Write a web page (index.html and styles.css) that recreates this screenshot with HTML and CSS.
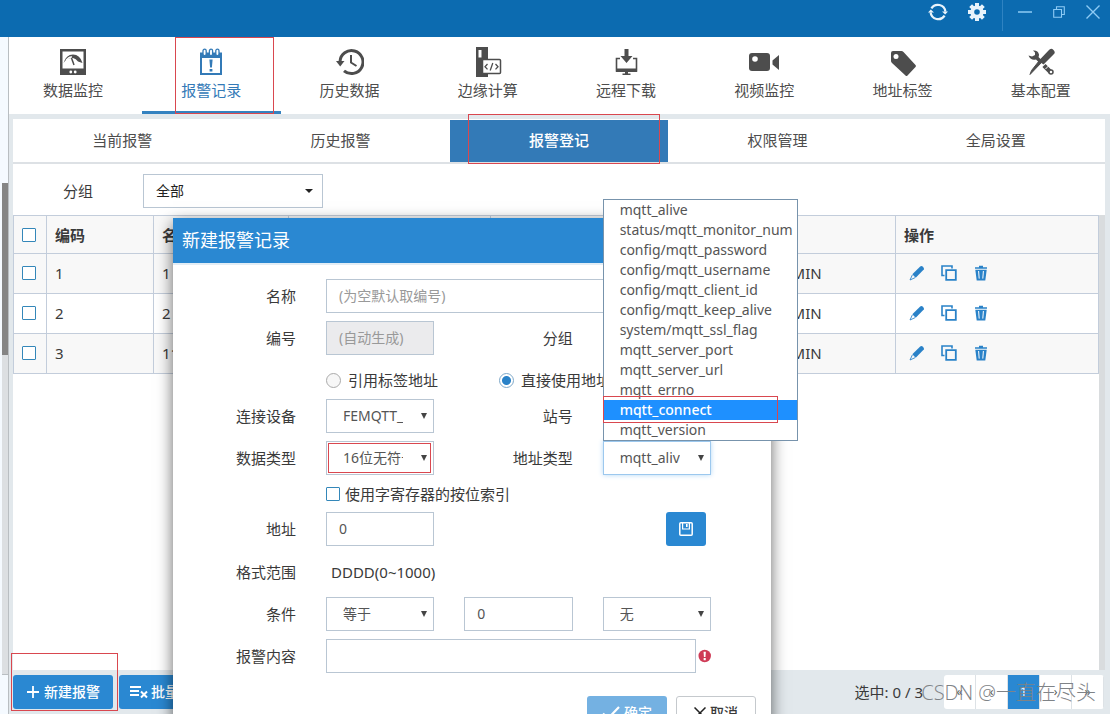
FILE: index.html
```html
<!DOCTYPE html>
<html lang="zh-CN">
<head>
<meta charset="utf-8">
<title>新建报警记录</title>
<link rel="stylesheet" href="styles.css">
</head>
<body>
<svg class="defs" aria-hidden="true">
  <symbol id="i-edit" viewBox="0 0 16 16"><path d="M3.300 9.300 11.200 1.400Q12.500.300 14 1.800T14.800 4.600L6.700 12.700Z" fill="currentColor"/><path d="M3.300 10 1 15l5-2.300" fill="none" stroke="currentColor" stroke-width=".9"/></symbol>
  <symbol id="i-copy" viewBox="0 0 16 16"><path d="M3.500 10.500H1V1h10v2.500" fill="none" stroke="currentColor" stroke-width="1.600"/><path d="M5.200 5.200h9.600v9.600H5.200z" fill="none" stroke="currentColor" stroke-width="1.800"/></symbol>
  <symbol id="i-trash" viewBox="0 0 16 16"><path d="M2 2.200h4V.8h4v1.400h4v1.600H2zM2.300 4.800h11.400L12.300 15.400H3.700z" fill="currentColor"/><path d="M5.600 6l.6 7.600M10.400 6l-.6 7.600" stroke="#fff" stroke-width="1"/></symbol>
</svg>

<header class="titlebar">
  <button class="title-btn" aria-label="刷新"><svg width="20" height="20" viewBox="0 0 20 20"><path d="M3.400 6.400A7.600 7.600 0 0 1 17.400 9.600M16.600 13.600A7.600 7.600 0 0 1 2.600 10.400" fill="none" stroke="#e8f3fb" stroke-width="2.200"/><path d="M14 9.400H20L17.200 12.600zM0 10.600h6L2.800 7.400z" fill="#e8f3fb"/></svg></button>
  <button class="title-btn" aria-label="设置"><svg width="18" height="18" viewBox="0 0 18 18"><g fill="#e8f3fb"><path d="M7 0h4v18H7zM0 7h18v4H0z"/><path d="M7 0h4v18H7zM0 7h18v4H0z" transform="rotate(45 9 9)"/><circle cx="9" cy="9" r="6.600"/></g><circle cx="9" cy="9" r="2.800" fill="#0c6bb0"/></svg></button>
  <div class="window-controls">
    <button class="title-btn" aria-label="最小化"><svg width="14" height="14" viewBox="0 0 14 14"><path d="M0 7h14" stroke="#8ecbf5" stroke-width="1.500"/></svg></button>
    <button class="title-btn" aria-label="还原"><svg width="12" height="12" viewBox="0 0 12 12"><path d="M.7 3.500h7.800v7.800H.7zM3.500 3.500V.7h7.800v7.800H8.500" fill="none" stroke="#8ecbf5" stroke-width="1.100"/></svg></button>
    <button class="title-btn" aria-label="关闭"><svg width="14" height="14" viewBox="0 0 14 14"><path d="M.5.5l13 13M13.500.5l-13 13" stroke="#8ecbf5" stroke-width="1.400"/></svg></button>
  </div>
</header>

<div class="app">
  <aside class="rail"><div class="rail-thumb"></div><div class="rail-track"></div></aside>
  <main class="content">
    <nav class="main-nav">
      <a href="#" class="nav-item"><svg width="28" height="28" viewBox="0 0 28 28"><path d="M1 1h26v26H1z" fill="currentColor"/><path d="M3.500 3.500h21v17h-21z" fill="#fff"/><path d="M4.500 15Q7 6.500 14 6.500T23.500 15L19 13.500Q17 10.500 14 10 8 9.500 4.500 15z" fill="currentColor"/><path d="M7 12.500Q10 8.500 13 9" fill="none" stroke="#fff" stroke-width="1.500"/><path d="M12.500 10l2.500 7" stroke="currentColor" stroke-width="1.500"/><circle cx="11.800" cy="24" r="1.400" fill="#fff"/><circle cx="16.200" cy="24" r="1.400" fill="#fff"/></svg><span>数据监控</span></a>
      <a href="#" class="nav-item active marked"><svg width="28" height="28" viewBox="0 0 28 28"><path d="M3 4.500h22V27H3z" fill="currentColor"/><path d="M5 10h18v15H5z" fill="#fff"/><g fill="#fff" stroke="currentColor" stroke-width="1.300"><rect x="6" y="1.200" width="3.200" height="6.500" rx="1.600"/><rect x="12.400" y="1.200" width="3.200" height="6.500" rx="1.600"/><rect x="18.800" y="1.200" width="3.200" height="6.500" rx="1.600"/></g><path d="M12.400 11.500h3.200l-.7 8h-1.800zM12.600 21h2.800v2.500h-2.800z" fill="currentColor"/></svg><span>报警记录</span></a>
      <a href="#" class="nav-item"><svg width="28" height="28" viewBox="0 0 28 28"><path d="M4 13.500A11.500 11.500 0 1 1 8 22.800" fill="none" stroke="currentColor" stroke-width="3"/><path d="M0 13h8.500L4.200 18.500z" fill="currentColor"/><path d="M15 7v7.500l5.500 3.500" fill="none" stroke="currentColor" stroke-width="2"/></svg><span>历史数据</span></a>
      <a href="#" class="nav-item"><svg width="28" height="30" viewBox="0 0 28 30"><path d="M2 0h12v30H2z" fill="currentColor"/><path d="M4.500 3h3v7.500h-3z" fill="#fff"/><rect x="8.500" y="12.500" width="18" height="14" rx="1" fill="#fff" stroke="currentColor" stroke-width="1.500"/><path d="M13.500 17l-2.500 2.700 2.500 2.700M21.500 17l2.500 2.700-2.500 2.700M18.800 16l-2.600 7.500" fill="none" stroke="currentColor" stroke-width="1.300"/></svg><span>边缘计算</span></a>
      <a href="#" class="nav-item"><svg width="28" height="28" viewBox="0 0 28 28"><path d="M8 10.500H4.500V23h20V10.500H21" fill="none" stroke="currentColor" stroke-width="1.600"/><path d="M4 20.500h21v3.500H4zM12.500 1h4v7h4l-6 7-6-7h4zM13 24h3v1.500h2.500V27h-8v-1.500H13z" fill="currentColor"/></svg><span>远程下载</span></a>
      <a href="#" class="nav-item"><svg width="32" height="28" viewBox="0 0 32 28"><rect x="1" y="5" width="21" height="18" rx="3" fill="currentColor"/><circle cx="7" cy="11" r="2.800" fill="#fff"/><path d="M24.500 12.500l6.500-5.500v15l-6.500-5.500z" fill="currentColor"/></svg><span>视频监控</span></a>
      <a href="#" class="nav-item"><svg width="28" height="28" viewBox="0 0 28 28"><path d="M2 5Q2 3 4 3h8.500Q13.500 3 14.500 4L26.500 17Q27.500 18 26.500 19L18.500 27.500Q17.500 28.500 16.500 27.500L3 15Q2 14 2 13z" fill="currentColor"/><circle cx="7" cy="8.500" r="2.500" fill="#fff"/></svg><span>地址标签</span></a>
      <a href="#" class="nav-item"><svg width="28" height="28" viewBox="0 0 28 28"><path d="M11.500 13L21.500 2.500Q24-.500 26.500 2T26.500 6.500L16.500 16.500z" fill="currentColor"/><path d="M15 14L3 26.500l1.500-4L12 13z" stroke="currentColor" fill="currentColor"/><path d="M6 2.500Q11 2 12 6.500Q12 8 11.500 9L15 12.500 12.500 15 9 11.500Q4 13 1.500 7.500L5 8.500 8 7 8 4.500z" fill="currentColor"/><path d="M17 17.500l6.500 6.500" stroke="currentColor" stroke-width="4.500"/><path d="M18.500 21l3-3" stroke="#fff" stroke-width="1"/><circle cx="24" cy="24" r="2" fill="#fff" stroke="currentColor" stroke-width="1.500"/></svg><span>基本配置</span></a>
    </nav>

    <div class="workspace">
      <nav class="sub-tabs">
        <a href="#" class="tab">当前报警</a>
        <a href="#" class="tab">历史报警</a>
        <a href="#" class="tab current marked">报警登记</a>
        <a href="#" class="tab">权限管理</a>
        <a href="#" class="tab">全局设置</a>
      </nav>
      <div class="filter">
        <label for="group">分组</label>
        <span class="select-box"><select id="group"><option>全部</option></select><svg class="caret" width="8" height="6" viewBox="0 0 8 6"><path d="M0 1h8L4 5z" fill="#222"/></svg></span>
      </div>
      <div class="table-wrap">
        <table class="alarms">
          <colgroup><col class="c-check"><col class="c-code"><col class="c-name"><col class="c-mid"><col><col class="c-ops"></colgroup>
          <thead><tr><th><input type="checkbox" aria-label="全选"></th><th>编码</th><th>名称</th><th></th><th></th><th>操作</th></tr></thead>
          <tbody>
            <tr><td><input type="checkbox" aria-label="选择 1"></td><td>1</td><td>1</td><td></td><td class="user">ADMIN</td><td><div class="ops"><button aria-label="编辑"><svg width="16" height="16"><use href="#i-edit"/></svg></button><button aria-label="复制"><svg width="16" height="16"><use href="#i-copy"/></svg></button><button aria-label="删除"><svg width="16" height="16"><use href="#i-trash"/></svg></button></div></td></tr>
            <tr><td><input type="checkbox" aria-label="选择 2"></td><td>2</td><td>2</td><td></td><td class="user">ADMIN</td><td><div class="ops"><button aria-label="编辑"><svg width="16" height="16"><use href="#i-edit"/></svg></button><button aria-label="复制"><svg width="16" height="16"><use href="#i-copy"/></svg></button><button aria-label="删除"><svg width="16" height="16"><use href="#i-trash"/></svg></button></div></td></tr>
            <tr><td><input type="checkbox" aria-label="选择 3"></td><td>3</td><td>11</td><td></td><td class="user">ADMIN</td><td><div class="ops"><button aria-label="编辑"><svg width="16" height="16"><use href="#i-edit"/></svg></button><button aria-label="复制"><svg width="16" height="16"><use href="#i-copy"/></svg></button><button aria-label="删除"><svg width="16" height="16"><use href="#i-trash"/></svg></button></div></td></tr>
          </tbody>
        </table>
        <div class="scrollbar"></div>
      </div>
    </div>

    <footer class="bottom-bar">
      <button class="btn primary marked"><svg width="14" height="14" viewBox="0 0 14 14"><path d="M7 1v12M1 7h12" stroke="#fff" stroke-width="1.800"/></svg>新建报警</button>
      <button class="btn primary bulk"><svg width="18" height="14" viewBox="0 0 18 14"><path d="M0 2h11M0 6h9M0 10h9M11 6.500l6 6M17 6.500l-6 6" stroke="#fff" stroke-width="2"/></svg>批量删除</button>
      <span class="count">选中: 0 / 3</span>
      <div class="pager"><button aria-label="首页">«</button><button aria-label="上一页">‹</button><button class="page-current">1</button><button aria-label="下一页">›</button><button aria-label="末页">»</button></div>
      <span class="watermark">CSDN @一直在尽头</span>
    </footer>
  </main>
</div>

<section class="modal" role="dialog" aria-labelledby="dlg-title">
  <h2 id="dlg-title">新建报警记录</h2>
  <form class="form">
    <div class="row"><label for="name">名称</label><input id="name" class="span-3" type="text" placeholder="(为空默认取编号)"></div>
    <div class="row"><label for="number">编号</label><input id="number" type="text" placeholder="(自动生成)" disabled><span class="label">分组</span></div>
    <div class="row radios">
      <label class="choice first"><input type="radio" name="mode">引用标签地址</label>
      <label class="choice second"><input type="radio" name="mode" checked>直接使用地址</label>
    </div>
    <div class="row"><label for="device">连接设备</label><span class="select-box"><select id="device"><option>FEMQTT_</option></select><svg class="arrow" width="6" height="7" viewBox="0 0 6 7"><path d="M0 0h6L3 6z" fill="#444"/></svg></span><span class="label">站号</span></div>
    <div class="row"><label for="dtype">数据类型</label><span class="select-box marked"><select id="dtype"><option>16位无符号</option></select><svg class="arrow" width="6" height="7" viewBox="0 0 6 7"><path d="M0 0h6L3 6z" fill="#444"/></svg></span><label for="atype">地址类型</label>
      <span class="select-box open"><select id="atype"><option>mqtt_alive</option></select><svg class="arrow" width="6" height="7" viewBox="0 0 6 7"><path d="M0 0h6L3 6z" fill="#444"/></svg>
        <ul class="menu" role="listbox" aria-label="地址类型">
          <li role="option">mqtt_alive</li><li role="option">status/mqtt_monitor_num</li><li role="option">config/mqtt_password</li><li role="option">config/mqtt_username</li><li role="option">config/mqtt_client_id</li><li role="option">config/mqtt_keep_alive</li><li role="option">system/mqtt_ssl_flag</li><li role="option">mqtt_server_port</li><li role="option">mqtt_server_url</li><li role="option">mqtt_errno</li><li role="option" class="selected marked" aria-selected="true">mqtt_connect</li><li role="option">mqtt_version</li>
        </ul></span></div>
    <div class="row bit-index"><label class="choice first"><input type="checkbox">使用字寄存器的按位索引</label></div>
    <div class="row"><label for="addr">地址</label><input id="addr" type="text" value="0"><button type="button" class="btn primary save" aria-label="保存"><svg width="14" height="14" viewBox="0 0 14 14"><rect x=".8" y=".8" width="12.400" height="12.400" rx="1" fill="none" stroke="#fff" stroke-width="1.500"/><path d="M3.600 1v6h6.800V1" fill="none" stroke="#fff" stroke-width="1.200"/><path d="M7.800 2v3" stroke="#fff" stroke-width="1.600"/></svg></button></div>
    <div class="row format"><span class="label">格式范围</span><span class="range">DDDD(0~1000)</span></div>
    <div class="row"><label for="cond">条件</label><span class="select-box"><select id="cond"><option>等于</option></select><svg class="arrow" width="6" height="7" viewBox="0 0 6 7"><path d="M0 0h6L3 6z" fill="#444"/></svg></span><input type="text" value="0" aria-label="条件值"><span class="select-box"><select aria-label="附加条件"><option>无</option></select><svg class="arrow" width="6" height="7" viewBox="0 0 6 7"><path d="M0 0h6L3 6z" fill="#444"/></svg></span></div>
    <div class="row"><label for="text">报警内容</label><div class="span-3 required"><input id="text" type="text"><svg width="14" height="14" viewBox="0 0 14 14"><circle cx="7" cy="7" r="6.500" fill="#cf3a56"/><path d="M5.800 2.500h2.400l-.4 5.500H6.200zM5.900 9.200h2.200v2.200H5.900z" fill="#fff"/></svg></div></div>
    <div class="actions">
      <button type="button" class="btn primary" disabled><svg width="18" height="14" viewBox="0 0 18 14"><path d="M1 7.500l5 5L17 1" fill="none" stroke="#fff" stroke-width="2.200"/></svg>确定</button>
      <button type="button" class="btn plain"><svg width="12" height="12" viewBox="0 0 12 12"><path d="M.5.5l11 11M11.500.5l-11 11" stroke="#222" stroke-width="1.500"/></svg>取消</button>
    </div>
  </form>
</section>
</body>
</html>
```
FILE: styles.css
```css
* { box-sizing: border-box; }
html { overflow: hidden; }
body {
  margin: 0;
  height: 100vh;
  display: flex;
  flex-direction: column;
  overflow: hidden;
  position: relative;
  font: 400 15px/20px "Noto Sans", "Noto Sans CJK SC", sans-serif;
  color: #3a3a3a;
  background: #fff;
}
button, input, select { font: inherit; color: inherit; }
button { border: 0; padding: 0; background: none; }
a { color: inherit; text-decoration: none; }
.defs { display: none; }
.marked { position: relative; }
.marked::after {
  content: "";
  position: absolute;
  border: 1px solid #d9474f;
  pointer-events: none;
}

/* Title bar */
.titlebar {
  flex: none;
  height: 37px;
  display: flex;
  justify-content: flex-end;
  gap: 20px;
  padding-right: 10px;
  background: #0c6bb0;
}
.title-btn { height: 24px; display: flex; align-items: center; }
.window-controls {
  display: flex;
  gap: 21px;
  height: 31px;
  margin-left: -4px;
  padding-left: 15px;
  border-left: 1px solid #2f83c2;
}

/* Frame */
.app { flex: 1; min-height: 0; display: flex; }
.rail {
  width: 9px;
  flex: none;
  display: flex;
  flex-direction: column;
  padding: 146px 0 39px 2px;
  background: #f5faff;
  border-right: 1px solid #b9bec2;
}
.rail-thumb { height: 172px; background: #858585; }
.rail-track { flex: 1; background: #dcdfe2; border-bottom: 1px solid #b9bec2; }
.content {
  flex: 1;
  min-width: 0;
  display: flex;
  flex-direction: column;
  background: #e2e8ec;
}

/* Main navigation */
.main-nav { flex: none; display: flex; height: 77px; background: #fff; }
.nav-item {
  flex: 1;
  height: 77px;
  display: flex;
  flex-direction: column;
  align-items: center;
  padding-top: 10px;
  color: #4d4d4d;
  border-bottom: 3px solid transparent;
}
.nav-item:first-child { margin-left: -5px; }
.nav-item svg { flex: none; height: 30px; margin-bottom: 3px; }
.nav-item.active { color: #337ab7; border-bottom-color: #3482c0; }
.nav-item.marked::after { top: 0; bottom: -3px; left: 33px; right: 7px; }

/* Workspace */
.workspace {
  flex: 1;
  min-height: 0;
  margin: 5px 5px 0 4px;
  display: flex;
  flex-direction: column;
  background: #fff;
}
.sub-tabs { display: flex; height: 45px; padding-top: 1px; border-bottom: 2px solid #dde1e5; flex: none; }
.tab { flex: 1; text-align: center; line-height: 40px; color: #4d4d4d; }
.tab.current { background: #337ab7; color: #fff; font-weight: 500; }
.tab.marked::after { top: -6px; bottom: -2px; left: 18px; right: 8px; }
.filter { flex: none; display: flex; align-items: center; height: 51px; padding: 2px 0 0 50px; }
.filter label { width: 80px; }
.filter .select-box { width: 180px; }
.select-box { position: relative; display: block; }
.select-box select, input[type="text"] {
  display: block;
  width: 100%;
  height: 34px;
  margin: 0;
  border: 1px solid #b9c6d3;
  border-radius: 0;
  background: #fff;
  font-size: 14px;
  color: #555;
  outline: 0;
}
.select-box select { appearance: none; padding: 0 30px 0 16px; }
.filter .select-box select { padding-left: 12px; color: #222; }
.caret, .arrow { position: absolute; top: 14px; right: 7px; }
.caret { right: 10px; }
input[type="text"] { padding: 0 12px 2px; }
input[type="text"]::placeholder { color: #999; opacity: 1; }
input[type="text"]:disabled { background: #ebebed; }
input[type="checkbox"] {
  appearance: none;
  display: block;
  flex: none;
  width: 14px;
  height: 14px;
  margin: 0;
  border: 1px solid #3487b9;
  border-radius: 1px;
  background: #fff;
}

/* Table */
.table-wrap { flex: 1; min-height: 0; display: flex; align-items: flex-start; }
.alarms { flex: 1; min-width: 0; table-layout: fixed; border-collapse: collapse; }
.alarms th, .alarms td { height: 40px; padding: 0 8px 2px; text-align: left; border: 1px solid #c3cddb; }
.alarms th { height: 38px; padding-bottom: 0; font-weight: 700; }
.alarms thead tr, .alarms tbody tr:nth-child(odd) { background: #f8f8f8; }
.c-check { width: 33px; }
.c-code { width: 107px; }
.c-name { width: 135px; }
.c-mid { width: 202px; }
.c-ops { width: 203px; }
.alarms td.user { padding-left: 280px; }
.ops { display: flex; gap: 16px; padding-left: 5px; color: #2a82c8; }
.ops button, .ops svg { display: block; }
.scrollbar { width: 6px; align-self: stretch; background: #d9dcde; }

/* Bottom bar */
.bottom-bar {
  flex: none;
  position: relative;
  height: 44px;
  display: flex;
  align-items: center;
  gap: 6px;
  padding: 0 6px 0 4px;
}
.btn {
  display: flex;
  align-items: center;
  justify-content: center;
  gap: 4px;
  height: 34px;
  padding: 0 13px;
  border-radius: 3px;
  font-size: 14px;
  font-weight: 500;
}
.btn.primary { background: #2a88d2; color: #fff; }
.btn.bulk { padding: 0 11px; gap: 3px; }
.bottom-bar .marked::after { top: -22px; bottom: -2px; left: -2px; right: -5px; }
.count { margin-left: auto; }
.pager { display: flex; width: 160px; margin-left: 15px; border-radius: 3px; overflow: hidden; }
.pager button { flex: 1; height: 34px; background: #fff; border-right: 1px solid #dde2e6; color: #555; font-size: 12px; }
.pager .page-current { background: #2a88d2; color: #fff; }
.watermark {
  position: absolute;
  right: 14px;
  top: 9px;
  font-family: "Open Sans", "Noto Sans CJK SC", sans-serif;
  font-weight: 300;
  font-size: 20px;
  line-height: 28px;
  color: #7f8387;
}

/* Dialog */
.modal {
  position: absolute;
  left: 173px;
  top: 218px;
  width: 598px;
  background: #fff;
  box-shadow: 0 5px 15px rgba(0, 0, 0, .6);
}
.modal h2 {
  margin: 0;
  padding: 0 9px;
  height: 47px;
  font-size: 18px;
  font-weight: 400;
  line-height: 45px;
  color: #fff;
  background: #2a88d2;
  border-bottom: 2px solid #e3edf5;
}
.form { display: flex; flex-direction: column; gap: 8px; padding: 14px 0 20px; }
.row {
  display: grid;
  grid-template-columns: 123px 1fr 1fr 1fr;
  column-gap: 30px;
  align-items: center;
  min-height: 34px;
  padding-right: 60px;
}
.row > label, .label { text-align: right; }
.span-3 { grid-column: 2 / 5; }
.row.radios { min-height: 28px; padding-top: 6px; }
.row.bit-index { min-height: 21px; }
.row.format { min-height: 35px; }
.row .choice { display: flex; align-items: center; gap: 7px; white-space: nowrap; }
.choice.first { grid-column: 2 / 4; }
.radios .first { grid-column: 2; }
.radios .second { grid-column: 3 / 5; padding-left: 31px; }
.row.bit-index .choice { gap: 5px; }
input[type="radio"] {
  appearance: none;
  flex: none;
  width: 15px;
  height: 15px;
  margin: 0;
  border: 1px solid #aaa;
  border-radius: 50%;
  background: #f7f7f7;
}
input[type="radio"]:checked { border-color: #7fa9c9; background: radial-gradient(circle, #2a82c8 4px, #fff 5px); }
.form .marked::after { inset: 2px 3px 2px 2px; }
.open select { border-color: #9cc8ee; box-shadow: 0 0 5px #b3d7f5; }
.menu {
  position: absolute;
  left: 0;
  bottom: 100%;
  width: 195px;
  margin: 0;
  padding: 0;
  list-style: none;
  background: #fff;
  border: 1px solid #7793ac;
  font-size: 14px;
  color: #555;
  z-index: 2;
}
.menu li { height: 20px; line-height: 20px; padding-left: 16px; white-space: nowrap; }
.menu .selected { background: #1e90ff; color: #fff; font-weight: 500; }
.form .menu .marked::after { inset: -4px 19px -3px -1px; }
.save { grid-column: 4; justify-self: end; width: 40px; margin-right: 5px; }
.range { grid-column: 2 / 4; padding-left: 5px; }
.required { display: flex; align-items: center; gap: 2px; }
.actions { display: flex; justify-content: flex-end; gap: 9px; padding: 15px 15px 0 0; }
.actions .btn { width: 80px; }
.actions .btn:disabled { background: #74b1e2; }
.actions .plain { border: 1px solid #c5c9cd; }
```
